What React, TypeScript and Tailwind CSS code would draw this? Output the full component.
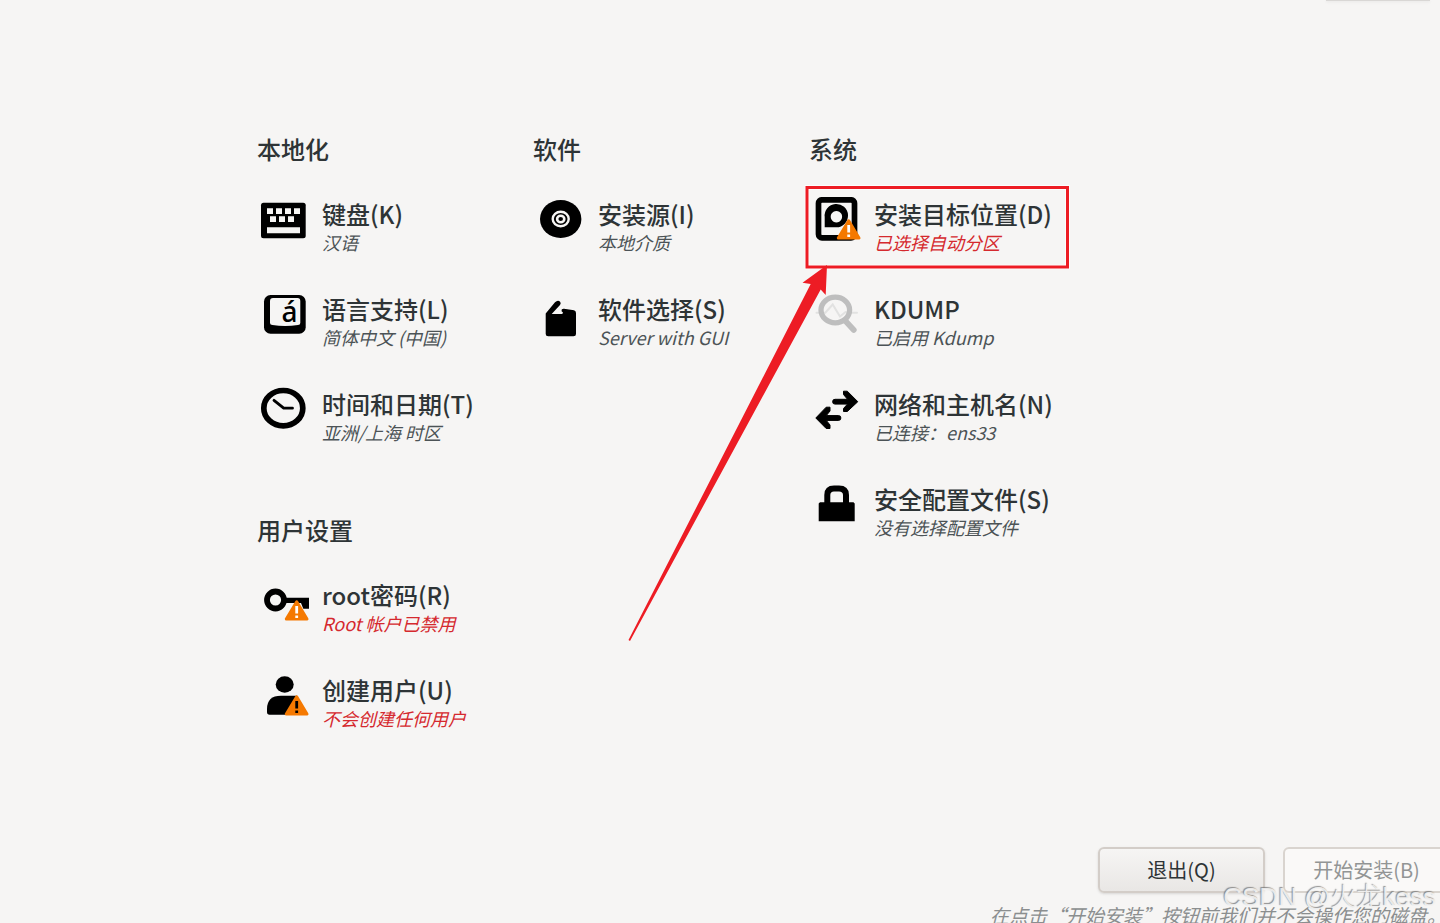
import React from "react";

type Spoke = {
  title: string;
  status: string;
  icon: React.ReactNode;
  warn?: boolean;
};

const Warning = ({ mark = "#fff" }: { mark?: string }) => (
  <g>
    <path
      d="M39.7 23.8 L50 41 H29.300 Z"
      fill="#f57900"
      stroke="#f57900"
      strokeWidth="3"
      strokeLinejoin="round"
    />
    <path d="M38.3 28h2.8v7.4h-2.8zM38.3 37.5h2.8v2.6h-2.8z" fill={mark} />
  </g>
);

const KeyboardIcon = (
  <g>
    <rect x="4" y="5.7" width="44.7" height="35.6" rx="2.5" />
    <path
      fill="#f6f5f4"
      d="M10 11.3h6V17h-6zM19 11.3h6V17h-6zM28 11.3h6V17h-6zM37 11.3h6V17h-6zM13 19.3h6V25h-6zM22 19.3h6V25h-6zM31 19.3h6V25h-6zM10 30.3h33v6H10z"
    />
  </g>
);

const LanguageIcon = (
  <g>
    <rect x="7" y="3" width="41.7" height="38.7" rx="6.5" />
    <path
      fill="#f6f5f4"
      d="M16 6H40.5Q43.3 6 43.3 9V31Q43.3 33 41 33Q28 35 15.5 33Q13 33 13 31V9Q13 6 16 6Z"
    />
    <text
      x="24.5"
      y="30"
      fontSize="28"
      fontWeight="500"
      fontFamily="'Noto Sans', sans-serif"
    >
      á
    </text>
  </g>
);

const ClockIcon = (
  <g fill="none" stroke="#000">
    <ellipse cx="26.3" cy="21.2" rx="19.5" ry="17.7" strokeWidth="5.7" />
    <path
      d="M17 13.3 26.7 21.2H35.5"
      strokeWidth="2.8"
      strokeLinecap="round"
      strokeLinejoin="round"
    />
  </g>
);

const DiscIcon = (
  <g>
    <ellipse cx="27.7" cy="22" rx="20.7" ry="19" />
    <ellipse cx="27.7" cy="22" rx="8" ry="7.3" stroke="#f6f5f4" strokeWidth="2.4" />
    <ellipse cx="27.7" cy="22" rx="3.6" ry="3.3" stroke="#f6f5f4" strokeWidth="2.6" />
  </g>
);

const PackageIcon = (
  <path d="M12.7 21.5 22 10.300Q25 7.300 27.300 10Q28.200 11.500 27 13L18.700 22H29.300L30 20.500Q27.800 19.500 28.700 17.500Q29.500 16.500 31 16.700L41 18.3Q43 18.8 43 21V42Q43 44.3 40.5 44.3H15.2Q12.7 44.3 12.7 42Z" />
);

const DiskIcon = (
  <g>
    <rect x="9.5" y="2.8" width="36" height="38" rx="3.5" fill="none" stroke="#000" strokeWidth="5.7" />
    <path
      fillRule="evenodd"
      d="M15.7 30.3V20A11.7 11.7 0 1 1 27.4 30.3ZM27.4 14a5.7 5.7 0 1 0 .01 0Z"
    />
    <Warning />
  </g>
);

const SearchIcon = (
  <g fill="none" stroke="#bebebe" strokeLinecap="round">
    <path d="M7.5 20.700H16.300L23.700 12.500 31 24.500 36.500 20 40 20.700H48" stroke="#e2e2e1" strokeWidth="2" />
    <ellipse cx="26.3" cy="18" rx="14.3" ry="12.8" strokeWidth="5.3" />
    <path d="M36.5 29 44.8 38" strokeWidth="5.7" />
  </g>
);

const NetworkIcon = (
  <g stroke="#000" strokeLinejoin="round">
    <path d="M26 12.3H38.500L34.5 7.500V4.2H38.3L48.8 14.7 38.3 24.5H34.5V21.500L38.500 17.1H26A2.4 2.4 0 0 1 26 12.3Z" />
    <path d="M29.5 28.600H17.300L21 24V20.2H17.2L6.800 31 17.2 41.5H21V38L17.300 33.400H29.5A2.4 2.4 0 0 0 29.5 28.6Z" />
  </g>
);

const LockIcon = (
  <g>
    <path
      d="M18.3 22V13Q18.3 6.5 25 6.5H30Q37 6.5 37 13V22"
      fill="none"
      stroke="#000"
      strokeWidth="6"
    />
    <path d="M11 20.3H44.5L45.7 21.5V39.3H9.7V21.5Z" />
  </g>
);

const KeyIcon = (
  <g>
    <circle cx="18.5" cy="22" r="8.5" fill="none" stroke="#000" strokeWidth="5.8" />
    <path d="M28 19.7H52V30.7H46.3L44 25H28Z" />
    <Warning />
  </g>
);

const UserIcon = (
  <g>
    <ellipse cx="27.7" cy="11.5" rx="9" ry="8.2" />
    <path d="M10 39V36Q10 22.7 24 22.7H40V41.7H12.5Q10 41.7 10 39Z" />
    <Warning mark="#000" />
  </g>
);

const localization: Spoke[] = [
  { title: "键盘(K)", status: "汉语", icon: KeyboardIcon },
  { title: "语言支持(L)", status: "简体中文 (中国)", icon: LanguageIcon },
  { title: "时间和日期(T)", status: "亚洲/上海 时区", icon: ClockIcon },
];

const software: Spoke[] = [
  { title: "安装源(I)", status: "本地介质", icon: DiscIcon },
  { title: "软件选择(S)", status: "Server with GUI", icon: PackageIcon },
];

const system: Spoke[] = [
  { title: "安装目标位置(D)", status: "已选择自动分区", icon: DiskIcon, warn: true },
  { title: "KDUMP", status: "已启用 Kdump", icon: SearchIcon },
  { title: "网络和主机名(N)", status: "已连接：ens33", icon: NetworkIcon },
  { title: "安全配置文件(S)", status: "没有选择配置文件", icon: LockIcon },
];

const users: Spoke[] = [
  { title: "root密码(R)", status: "Root 帐户已禁用", icon: KeyIcon, warn: true },
  { title: "创建用户(U)", status: "不会创建任何用户", icon: UserIcon, warn: true },
];

const Section = ({ heading, items }: { heading: string; items: Spoke[] }) => (
  <section>
    <h2 className="text-2xl leading-8 font-medium">{heading}</h2>
    <div className="mt-8 flex flex-col items-start gap-[31px]">
      {items.map((item) => (
        <button key={item.title} className="flex items-start gap-[9px] text-left whitespace-nowrap">
          <svg className="h-14 w-14 shrink-0" viewBox="0 0 56 56" aria-hidden="true">
            {item.icon}
          </svg>
          <span className="flex flex-col pt-[3px] pb-[5px]">
            <span className="text-2xl leading-7 font-medium">{item.title}</span>
            <span
              className={
                item.warn
                  ? "text-lg leading-7 italic text-[#d5292e]"
                  : "text-lg leading-7 italic text-[#4c5356]"
              }
            >
              {item.status}
            </span>
          </span>
        </button>
      ))}
    </div>
  </section>
);

export default function App() {
  return (
    <div className="relative flex h-screen flex-col overflow-hidden bg-[#f6f5f4] font-['Noto_Sans_CJK_SC',sans-serif] text-[#2e3436]">
      <header className="flex justify-end pr-2.5">
        <div className="h-px w-26 bg-[#d9d7d5] shadow-sm" />
      </header>

      <main className="grid grid-cols-[repeat(3,276px)] items-start pt-[132px] pl-[257px]">
        <div className="flex flex-col gap-[63px]">
          <Section heading="本地化" items={localization} />
          <Section heading="用户设置" items={users} />
        </div>
        <Section heading="软件" items={software} />
        <Section heading="系统" items={system} />
      </main>

      <footer className="mt-[110px] flex flex-col items-end">
        <div className="-mr-2.5 flex gap-[18px]">
          <button className="h-[46px] w-[167px] rounded-md border-2 border-[#d3cdc8] bg-linear-to-b from-[#f6f5f4] to-[#e9e7e5] text-xl shadow-sm">
            退出(Q)
          </button>
          <button
            disabled
            className="h-[46px] w-[167px] rounded-md border-2 border-[#d9d4cf] bg-[#faf9f8] text-xl text-[#929595]"
          >
            开始安装(B)
          </button>
        </div>
        <p className="mt-2 -mr-1.5 text-[19px] leading-7 whitespace-nowrap italic text-[#8b8e8f]">
          在点击“开始安装”按钮前我们并不会操作您的磁盘。
        </p>
      </footer>

      {/* Highlight around the install destination, with the arrow to it */}
      <svg
        className="pointer-events-none absolute top-0 left-0 h-[660px] w-[1080px]"
        viewBox="0 0 1080 660"
        aria-hidden="true"
      >
        <rect x="807" y="187.5" width="260.5" height="79.5" fill="none" stroke="#fff" strokeWidth="4.5" />
        <rect x="807" y="187.5" width="260.5" height="79.5" fill="none" stroke="#ed1c24" strokeWidth="3" />
        <path
          d="M827 265 L802.5 282.7 810.7 284 628.5 640 630 641 820.7 289.5 825.7 295Z"
          fill="#ed1c24"
        />
      </svg>

      <div className="pointer-events-none absolute right-1 bottom-2 font-['Liberation_Sans','Noto_Sans_CJK_SC',sans-serif] text-[26px] leading-9 font-light whitespace-nowrap text-[#f4f4f4e6] [text-shadow:-1px_-1px_1px_#666666b3]">
        CSDN @火龙kess
      </div>
    </div>
  );
}
